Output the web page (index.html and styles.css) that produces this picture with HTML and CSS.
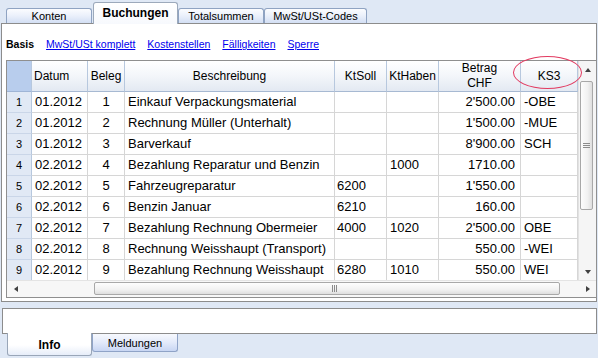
FILE: index.html
```html
<!DOCTYPE html>
<html lang="de">
<head>
<meta charset="utf-8">
<title>Buchungen</title>
<link rel="stylesheet" href="styles.css">
</head>
<body>
<div class="toptabs">
  <div class="tab w86">Konten</div>
  <div class="tab active">Buchungen</div>
  <div class="tab w86">Totalsummen</div>
  <div class="tab w103">MwSt/USt-Codes</div>
</div>
<div class="panel">
  <div class="links">
    <b class="cur">Basis</b>
    <a href="#">MwSt/USt komplett</a>
    <a href="#">Kostenstellen</a>
    <a href="#">Fälligkeiten</a>
    <a href="#">Sperre</a>
  </div>
  <div class="gridwrap">
    <div class="grid">
      <div class="hc corner"></div>
      <div class="hc left">Datum</div>
      <div class="hc">Beleg</div>
      <div class="hc">Beschreibung</div>
      <div class="hc">KtSoll</div>
      <div class="hc">KtHaben</div>
      <div class="hc two">Betrag<br>CHF</div>
      <div class="hc">KS3</div>

      <div class="rn">1</div><div class="c pl3">01.2012</div><div class="c ctr">1</div><div class="c pl3">Einkauf Verpackungsmaterial</div><div class="c pl2"></div><div class="c pl3"></div><div class="c num">2'500.00</div><div class="c pl3">-OBE</div>
      <div class="rn">2</div><div class="c pl3">01.2012</div><div class="c ctr">2</div><div class="c pl3">Rechnung Müller (Unterhalt)</div><div class="c pl2"></div><div class="c pl3"></div><div class="c num">1'500.00</div><div class="c pl3">-MUE</div>
      <div class="rn">3</div><div class="c pl3">01.2012</div><div class="c ctr">3</div><div class="c pl3">Barverkauf</div><div class="c pl2"></div><div class="c pl3"></div><div class="c num">8'900.00</div><div class="c pl3">SCH</div>
      <div class="rn">4</div><div class="c pl3">02.2012</div><div class="c ctr">4</div><div class="c pl3">Bezahlung Reparatur und Benzin</div><div class="c pl2"></div><div class="c pl3">1000</div><div class="c num">1710.00</div><div class="c pl3"></div>
      <div class="rn">5</div><div class="c pl3">02.2012</div><div class="c ctr">5</div><div class="c pl3">Fahrzeugreparatur</div><div class="c pl2">6200</div><div class="c pl3"></div><div class="c num">1'550.00</div><div class="c pl3"></div>
      <div class="rn">6</div><div class="c pl3">02.2012</div><div class="c ctr">6</div><div class="c pl3">Benzin Januar</div><div class="c pl2">6210</div><div class="c pl3"></div><div class="c num">160.00</div><div class="c pl3"></div>
      <div class="rn">7</div><div class="c pl3">02.2012</div><div class="c ctr">7</div><div class="c pl3">Bezahlung Rechnung Obermeier</div><div class="c pl2">4000</div><div class="c pl3">1020</div><div class="c num">2'500.00</div><div class="c pl3">OBE</div>
      <div class="rn">8</div><div class="c pl3">02.2012</div><div class="c ctr">8</div><div class="c pl3">Rechnung Weisshaupt (Transport)</div><div class="c pl2"></div><div class="c pl3"></div><div class="c num">550.00</div><div class="c pl3">-WEI</div>
      <div class="rn">9</div><div class="c pl3">02.2012</div><div class="c ctr">9</div><div class="c pl3">Bezahlung Rechnung Weisshaupt</div><div class="c pl2">6280</div><div class="c pl3">1010</div><div class="c num">550.00</div><div class="c pl3">WEI</div>
    </div>
    <div class="vscroll">
      <div class="sbtn"><span class="tri up"></span></div>
      <div class="vtrack">
        <div class="vthumb">
          <svg width="7" height="6" viewBox="0 0 7 6"><path d="M0 0.5h7M0 2.5h7M0 4.5h7" stroke="#8c8c8c" stroke-width="1"/></svg>
        </div>
      </div>
      <div class="sbtn"><span class="tri down"></span></div>
    </div>
    <div class="hscroll">
      <div class="hbtn"><span class="tri lt"></span></div>
      <div class="htrack">
        <div class="hthumb">
          <svg width="6" height="7" viewBox="0 0 6 7"><path d="M0.5 0v7M2.5 0v7M4.5 0v7" stroke="#8c8c8c" stroke-width="1"/></svg>
        </div>
      </div>
      <div class="hbtn"><span class="tri rt"></span></div>
    </div>
    <div class="mark"></div>
  </div>
</div>
<div class="infobox"></div>
<div class="bottabs">
  <div class="btab active">Info</div>
  <div class="btab">Meldungen</div>
</div>
</body>
</html>
```
FILE: styles.css
```css
* { box-sizing: border-box; margin: 0; padding: 0; }
html, body { width: 598px; height: 358px; overflow: hidden; }
body {
  background: #dfe8f5;
  font-family: "Liberation Sans", Arial, sans-serif;
  font-size: 11px;
  color: #000;
}

/* top tabs */
.toptabs {
  display: flex;
  align-items: flex-end;
  height: 23px;
  padding-left: 6px;
  position: relative;
  z-index: 2;
}
.tab {
  height: 15px;
  border: 1px solid #8fa3c2;
  border-bottom: none;
  border-radius: 3px 3px 0 0;
  background: linear-gradient(#fbfcfe, #ecf1fb 45%, #d3dff4);
  display: flex;
  align-items: center;
  justify-content: center;
  font-size: 11px;
  line-height: 13px;
}
.w86 { width: 86px; }
.w103 { width: 103px; }
.tab.active {
  width: 85px;
  height: 22px;
  margin: 0 0 -1px 1px;
  background: linear-gradient(#ffffff, #f7f9fd);
  border-color: #9ca9bb;
  font-weight: bold;
  font-size: 12px;
  padding-bottom: 1px;
}

/* main panel */
.panel {
  margin-left: 1px;
  width: 596px;
  height: 279px;
  background: #fff;
  border: 1px solid #8c8c8c;
  padding: 0 1px 3px 2px;
  position: relative;
  z-index: 1;
}
.links {
  height: 36px;
  display: flex;
  gap: 12px;
  padding: 14px 0 0 2px;
  line-height: 13px;
  font-size: 10.5px;
}
.links a { color: #0000ee; text-decoration: underline; }
.links .cur { font-weight: bold; }

.gridwrap {
  margin-left: 2px;
  width: 591px;
  height: 238px;
  border: 1px solid #8f8f8f;
  display: grid;
  grid-template-columns: 571px 18px;
  grid-template-rows: 219px 17px;
  position: relative;
}
.grid {
  display: grid;
  grid-template-columns: 25px 56px 37px 210px 52px 52px 82px 57px;
  grid-template-rows: 31px;
  grid-auto-rows: 21px;
  overflow: hidden;
  background: #fff;
}
.hc {
  background: linear-gradient(#ffffff, #f3f6fa 50%, #e3e9f2);
  border-right: 1px solid #b7c8de;
  border-bottom: 1px solid #a7b9d2;
  font-size: 12px;
  line-height: 15px;
  display: flex;
  align-items: center;
  justify-content: center;
  text-align: center;
}
.hc.left { justify-content: flex-start; padding-left: 2px; }
.hc.corner { background: #b8cded; border-bottom-color: #9fb5d6; }
.rn {
  background: #e1e9f5;
  border-right: 1px solid #b7c8de;
  border-bottom: 1px solid #cad6e8;
  font-size: 11px;
  line-height: 20px;
  text-align: center;
}
.c {
  border-right: 1px solid #d6d6d6;
  border-bottom: 1px solid #d6d6d6;
  font-size: 13px;
  line-height: 20px;
  white-space: nowrap;
  overflow: hidden;
}
.pl3 { padding-left: 3px; }
.pl2 { padding-left: 2px; }
.ctr { text-align: center; }
.num { text-align: right; padding-right: 5px; }

/* scrollbars */
.vscroll {
  display: flex;
  flex-direction: column;
  background: #f5f5f5;
  border-left: 1px solid #e2e2e2;
}
.sbtn {
  height: 17px;
  display: flex;
  align-items: center;
  justify-content: center;
}
.vtrack { flex: 1; padding: 3px 0 0 1px; }
.vthumb {
  width: 13px;
  height: 129px;
  border: 1px solid #a8a8a8;
  border-radius: 2px;
  background: linear-gradient(90deg, #fdfdfd, #f1f1f1 60%, #dedede);
  display: flex;
  align-items: center;
  justify-content: center;
}
.hscroll {
  grid-column: 1 / span 2;
  display: flex;
  background: #f7f7f7;
  border-top: 1px solid #e4e4e4;
}
.hbtn {
  width: 17px;
  display: flex;
  align-items: center;
  justify-content: center;
}
.htrack { flex: 1; padding: 1px 0 0 70px; }
.hthumb {
  width: 466px;
  height: 13px;
  border: 1px solid #a8a8a8;
  border-radius: 2px;
  background: linear-gradient(#fdfdfd, #f1f1f1 60%, #dedede);
  display: flex;
  align-items: center;
  justify-content: flex-start;
  padding-left: 237px;
}
.tri { width: 0; height: 0; display: block; }
.tri.up { border-left: 3px solid transparent; border-right: 3px solid transparent; border-bottom: 4px solid #404040; }
.tri.down { border-left: 3px solid transparent; border-right: 3px solid transparent; border-top: 4px solid #404040; }
.tri.lt { border-top: 3px solid transparent; border-bottom: 3px solid transparent; border-right: 4px solid #404040; }
.tri.rt { border-top: 3px solid transparent; border-bottom: 3px solid transparent; border-left: 4px solid #404040; }

/* highlight ellipse */
.mark {
  position: absolute;
  left: 506px;
  top: -5px;
  width: 69px;
  height: 33px;
  border: 1.5px solid #e23a60;
  border-radius: 50%;
  pointer-events: none;
}

/* bottom area */
.infobox {
  margin: 6px 0 0 2px;
  width: 595px;
  height: 26px;
  background: #fff;
  border: 1px solid #8c8c8c;
}
.bottabs {
  display: flex;
  align-items: flex-start;
  padding-left: 7px;
  position: relative;
}
.btab {
  width: 86px;
  height: 18px;
  border: 1px solid #8fa3c7;
  border-top: none;
  border-radius: 0 0 3px 3px;
  background: linear-gradient(#f7f9fe, #e3eafa 50%, #c8d6f3);
  display: flex;
  align-items: center;
  justify-content: center;
  font-size: 11px;
}
.btab.active {
  width: 85px;
  height: 23px;
  margin-top: -1px;
  background: linear-gradient(#ffffff, #ffffff 55%, #e6edf9);
  border-color: #99a6b8;
  font-weight: bold;
  font-size: 12px;
  padding-top: 1px;
}
```
